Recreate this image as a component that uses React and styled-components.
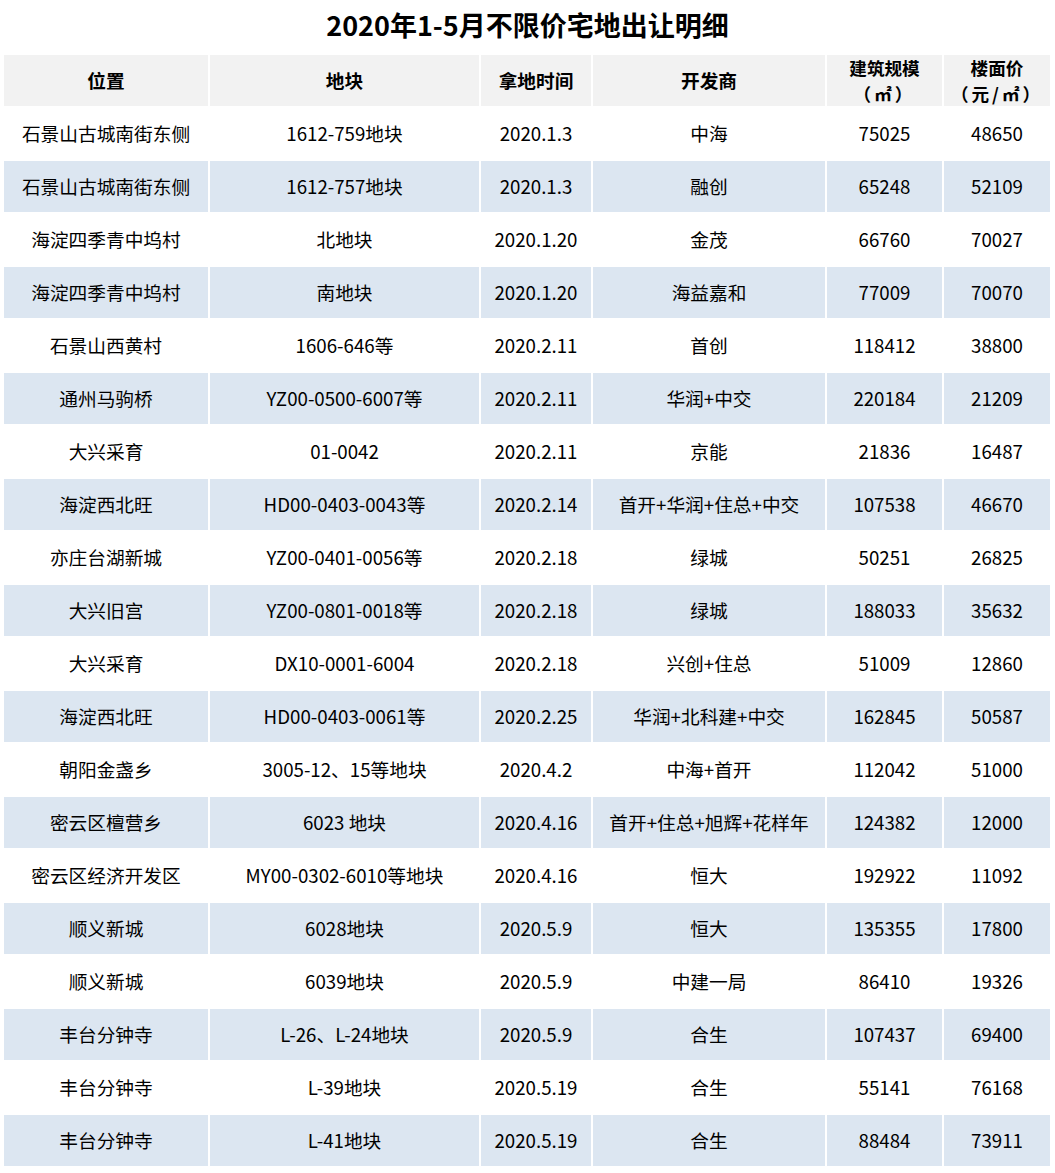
import React from "react";
import styled, { createGlobalStyle } from "styled-components";

const GlobalStyle = createGlobalStyle`
  html, body {
    margin: 0;
    padding: 0;
    background: #ffffff;
  }
  body {
    font-family: "Noto Sans CJK SC", "Noto Sans", sans-serif;
    color: #000;
  }
`;

const Page = styled.div`
  width: 1055px;
  display: flex;
  flex-direction: column;
`;

const Title = styled.h1`
  margin: 0;
  height: 55px;
  display: flex;
  align-items: center;
  justify-content: center;
  font-size: 27px;
  font-weight: 700;
  letter-spacing: 0;
  padding-bottom: 7px;
  box-sizing: border-box;
`;

const Table = styled.div`
  margin-left: 4px;
  width: 1046px;
  display: flex;
  flex-direction: column;
  gap: 2px;
`;

const Row = styled.div`
  display: grid;
  grid-template-columns: 204px 269px 110px 232px 115px 106px;
  gap: 2px;
  height: 51px;
`;

const Cell = styled.div`
  display: flex;
  align-items: center;
  justify-content: center;
  text-align: center;
  box-sizing: border-box;
  padding-bottom: ${(p) => (p.$multi ? 0 : 3)}px;
  background: ${(p) => (p.$tone === "head" ? "#f2f2f2" : p.$tone === "alt" ? "#dce6f1" : "#ffffff")};
  font-size: 18.7px;
  font-weight: ${(p) => (p.$tone === "head" ? 700 : 400)};
  white-space: nowrap;
  overflow: hidden;
`;

const HeadLines = styled.div`
  font-size: 17.6px;
  line-height: 25.5px;
`;

const Unit = styled.div`
  letter-spacing: 3px;
`;

const headers = [
  ["位置"],
  ["地块"],
  ["拿地时间"],
  ["开发商"],
  ["建筑规模", "（㎡）"],
  ["楼面价", "（元/㎡）"],
];

const rows = [
  ["石景山古城南街东侧", "1612-759地块", "2020.1.3", "中海", "75025", "48650"],
  ["石景山古城南街东侧", "1612-757地块", "2020.1.3", "融创", "65248", "52109"],
  ["海淀四季青中坞村", "北地块", "2020.1.20", "金茂", "66760", "70027"],
  ["海淀四季青中坞村", "南地块", "2020.1.20", "海益嘉和", "77009", "70070"],
  ["石景山西黄村", "1606-646等", "2020.2.11", "首创", "118412", "38800"],
  ["通州马驹桥", "YZ00-0500-6007等", "2020.2.11", "华润+中交", "220184", "21209"],
  ["大兴采育", "01-0042", "2020.2.11", "京能", "21836", "16487"],
  ["海淀西北旺", "HD00-0403-0043等", "2020.2.14", "首开+华润+住总+中交", "107538", "46670"],
  ["亦庄台湖新城", "YZ00-0401-0056等", "2020.2.18", "绿城", "50251", "26825"],
  ["大兴旧宫", "YZ00-0801-0018等", "2020.2.18", "绿城", "188033", "35632"],
  ["大兴采育", "DX10-0001-6004", "2020.2.18", "兴创+住总", "51009", "12860"],
  ["海淀西北旺", "HD00-0403-0061等", "2020.2.25", "华润+北科建+中交", "162845", "50587"],
  ["朝阳金盏乡", "3005-12、15等地块", "2020.4.2", "中海+首开", "112042", "51000"],
  ["密云区檀营乡", "6023 地块", "2020.4.16", "首开+住总+旭辉+花样年", "124382", "12000"],
  ["密云区经济开发区", "MY00-0302-6010等地块", "2020.4.16", "恒大", "192922", "11092"],
  ["顺义新城", "6028地块", "2020.5.9", "恒大", "135355", "17800"],
  ["顺义新城", "6039地块", "2020.5.9", "中建一局", "86410", "19326"],
  ["丰台分钟寺", "L-26、L-24地块", "2020.5.9", "合生", "107437", "69400"],
  ["丰台分钟寺", "L-39地块", "2020.5.19", "合生", "55141", "76168"],
  ["丰台分钟寺", "L-41地块", "2020.5.19", "合生", "88484", "73911"],
];

export default function App() {
  return (
    <Page>
      <GlobalStyle />
      <Title>2020年1-5月不限价宅地出让明细</Title>
      <Table>
        <Row>
          {headers.map((h, i) =>
            h[1] ? (
              <Cell key={i} $tone="head" $multi>
                <HeadLines>
                  <div>{h[0]}</div>
                  <Unit>{h[1]}</Unit>
                </HeadLines>
              </Cell>
            ) : (
              <Cell key={i} $tone="head">
                {h[0]}
              </Cell>
            )
          )}
        </Row>
        {rows.map((r, i) => (
          <Row key={i}>
            {r.map((v, j) => (
              <Cell key={j} $tone={i % 2 === 1 ? "alt" : "plain"}>
                {v}
              </Cell>
            ))}
          </Row>
        ))}
      </Table>
    </Page>
  );
}
